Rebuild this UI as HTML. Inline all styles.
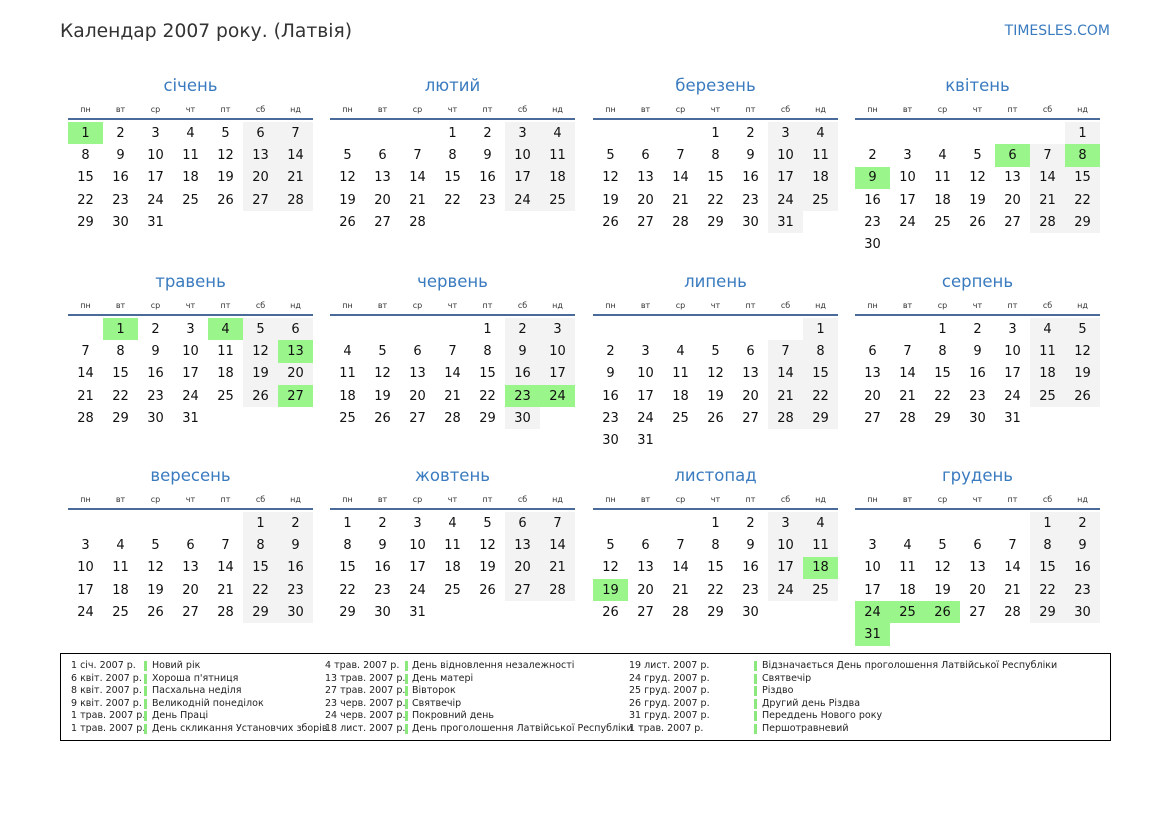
<!DOCTYPE html>
<html><head><meta charset="utf-8">
<style>
*{margin:0;padding:0;box-sizing:border-box}
body{width:1169px;height:827px;background:#fff;position:relative;font-family:"DejaVu Sans","Liberation Sans",sans-serif;color:#222;overflow:hidden}
.title{position:absolute;left:60px;top:21px;font-size:18.7px;color:#333}
.logo{position:absolute;right:59px;top:23px;font-size:14px;color:#3a7bbf}
.m{position:absolute;width:245px}
.m h2{font-weight:normal;font-size:16.5px;color:#3a7bbf;text-align:center;height:24px;line-height:24px}
.m .d{display:flex;font-size:8px;color:#333;height:22px;line-height:24px;border-bottom:2px solid #4a6a9a}
.m .d span{width:35px;text-align:center}
.m table{border-collapse:collapse;margin-top:2px}
.m td{width:35px;height:22.3px;text-align:center;font-size:13px;padding:0;color:#111}
td.w{background:#f3f3f3}
td.h{background:#9af58b}
.leg{position:absolute;left:60px;top:653px;width:1051px;height:88px;border:1px solid #000;font-size:9.5px;color:#222}
.leg div{position:absolute;white-space:nowrap;line-height:12.6px}
.bar{position:absolute;width:3px;height:10px;background:#8be87c}
</style></head><body>
<div class="title">Календар 2007 року. (Латвія)</div>
<div class="logo">TIMESLES.COM</div>

<div class="m" style="left:68px;top:74px"><h2>січень</h2><div class="d"><span>пн</span><span>вт</span><span>ср</span><span>чт</span><span>пт</span><span>сб</span><span>нд</span></div><table>
<tr><td class="h">1</td><td>2</td><td>3</td><td>4</td><td>5</td><td class="w">6</td><td class="w">7</td></tr>
<tr><td>8</td><td>9</td><td>10</td><td>11</td><td>12</td><td class="w">13</td><td class="w">14</td></tr>
<tr><td>15</td><td>16</td><td>17</td><td>18</td><td>19</td><td class="w">20</td><td class="w">21</td></tr>
<tr><td>22</td><td>23</td><td>24</td><td>25</td><td>26</td><td class="w">27</td><td class="w">28</td></tr>
<tr><td>29</td><td>30</td><td>31</td><td></td><td></td><td></td><td></td></tr></table></div>

<div class="m" style="left:330px;top:74px"><h2>лютий</h2><div class="d"><span>пн</span><span>вт</span><span>ср</span><span>чт</span><span>пт</span><span>сб</span><span>нд</span></div><table>
<tr><td></td><td></td><td></td><td>1</td><td>2</td><td class="w">3</td><td class="w">4</td></tr>
<tr><td>5</td><td>6</td><td>7</td><td>8</td><td>9</td><td class="w">10</td><td class="w">11</td></tr>
<tr><td>12</td><td>13</td><td>14</td><td>15</td><td>16</td><td class="w">17</td><td class="w">18</td></tr>
<tr><td>19</td><td>20</td><td>21</td><td>22</td><td>23</td><td class="w">24</td><td class="w">25</td></tr>
<tr><td>26</td><td>27</td><td>28</td><td></td><td></td><td></td><td></td></tr></table></div>

<div class="m" style="left:593px;top:74px"><h2>березень</h2><div class="d"><span>пн</span><span>вт</span><span>ср</span><span>чт</span><span>пт</span><span>сб</span><span>нд</span></div><table>
<tr><td></td><td></td><td></td><td>1</td><td>2</td><td class="w">3</td><td class="w">4</td></tr>
<tr><td>5</td><td>6</td><td>7</td><td>8</td><td>9</td><td class="w">10</td><td class="w">11</td></tr>
<tr><td>12</td><td>13</td><td>14</td><td>15</td><td>16</td><td class="w">17</td><td class="w">18</td></tr>
<tr><td>19</td><td>20</td><td>21</td><td>22</td><td>23</td><td class="w">24</td><td class="w">25</td></tr>
<tr><td>26</td><td>27</td><td>28</td><td>29</td><td>30</td><td class="w">31</td><td></td></tr></table></div>

<div class="m" style="left:855px;top:74px"><h2>квітень</h2><div class="d"><span>пн</span><span>вт</span><span>ср</span><span>чт</span><span>пт</span><span>сб</span><span>нд</span></div><table>
<tr><td></td><td></td><td></td><td></td><td></td><td></td><td class="w">1</td></tr>
<tr><td>2</td><td>3</td><td>4</td><td>5</td><td class="h">6</td><td class="w">7</td><td class="h">8</td></tr>
<tr><td class="h">9</td><td>10</td><td>11</td><td>12</td><td>13</td><td class="w">14</td><td class="w">15</td></tr>
<tr><td>16</td><td>17</td><td>18</td><td>19</td><td>20</td><td class="w">21</td><td class="w">22</td></tr>
<tr><td>23</td><td>24</td><td>25</td><td>26</td><td>27</td><td class="w">28</td><td class="w">29</td></tr>
<tr><td>30</td><td></td><td></td><td></td><td></td><td></td><td></td></tr></table></div>

<div class="m" style="left:68px;top:270px"><h2>травень</h2><div class="d"><span>пн</span><span>вт</span><span>ср</span><span>чт</span><span>пт</span><span>сб</span><span>нд</span></div><table>
<tr><td></td><td class="h">1</td><td>2</td><td>3</td><td class="h">4</td><td class="w">5</td><td class="w">6</td></tr>
<tr><td>7</td><td>8</td><td>9</td><td>10</td><td>11</td><td class="w">12</td><td class="h">13</td></tr>
<tr><td>14</td><td>15</td><td>16</td><td>17</td><td>18</td><td class="w">19</td><td class="w">20</td></tr>
<tr><td>21</td><td>22</td><td>23</td><td>24</td><td>25</td><td class="w">26</td><td class="h">27</td></tr>
<tr><td>28</td><td>29</td><td>30</td><td>31</td><td></td><td></td><td></td></tr></table></div>

<div class="m" style="left:330px;top:270px"><h2>червень</h2><div class="d"><span>пн</span><span>вт</span><span>ср</span><span>чт</span><span>пт</span><span>сб</span><span>нд</span></div><table>
<tr><td></td><td></td><td></td><td></td><td>1</td><td class="w">2</td><td class="w">3</td></tr>
<tr><td>4</td><td>5</td><td>6</td><td>7</td><td>8</td><td class="w">9</td><td class="w">10</td></tr>
<tr><td>11</td><td>12</td><td>13</td><td>14</td><td>15</td><td class="w">16</td><td class="w">17</td></tr>
<tr><td>18</td><td>19</td><td>20</td><td>21</td><td>22</td><td class="h">23</td><td class="h">24</td></tr>
<tr><td>25</td><td>26</td><td>27</td><td>28</td><td>29</td><td class="w">30</td><td></td></tr></table></div>

<div class="m" style="left:593px;top:270px"><h2>липень</h2><div class="d"><span>пн</span><span>вт</span><span>ср</span><span>чт</span><span>пт</span><span>сб</span><span>нд</span></div><table>
<tr><td></td><td></td><td></td><td></td><td></td><td></td><td class="w">1</td></tr>
<tr><td>2</td><td>3</td><td>4</td><td>5</td><td>6</td><td class="w">7</td><td class="w">8</td></tr>
<tr><td>9</td><td>10</td><td>11</td><td>12</td><td>13</td><td class="w">14</td><td class="w">15</td></tr>
<tr><td>16</td><td>17</td><td>18</td><td>19</td><td>20</td><td class="w">21</td><td class="w">22</td></tr>
<tr><td>23</td><td>24</td><td>25</td><td>26</td><td>27</td><td class="w">28</td><td class="w">29</td></tr>
<tr><td>30</td><td>31</td><td></td><td></td><td></td><td></td><td></td></tr></table></div>

<div class="m" style="left:855px;top:270px"><h2>серпень</h2><div class="d"><span>пн</span><span>вт</span><span>ср</span><span>чт</span><span>пт</span><span>сб</span><span>нд</span></div><table>
<tr><td></td><td></td><td>1</td><td>2</td><td>3</td><td class="w">4</td><td class="w">5</td></tr>
<tr><td>6</td><td>7</td><td>8</td><td>9</td><td>10</td><td class="w">11</td><td class="w">12</td></tr>
<tr><td>13</td><td>14</td><td>15</td><td>16</td><td>17</td><td class="w">18</td><td class="w">19</td></tr>
<tr><td>20</td><td>21</td><td>22</td><td>23</td><td>24</td><td class="w">25</td><td class="w">26</td></tr>
<tr><td>27</td><td>28</td><td>29</td><td>30</td><td>31</td><td></td><td></td></tr></table></div>

<div class="m" style="left:68px;top:464px"><h2>вересень</h2><div class="d"><span>пн</span><span>вт</span><span>ср</span><span>чт</span><span>пт</span><span>сб</span><span>нд</span></div><table>
<tr><td></td><td></td><td></td><td></td><td></td><td class="w">1</td><td class="w">2</td></tr>
<tr><td>3</td><td>4</td><td>5</td><td>6</td><td>7</td><td class="w">8</td><td class="w">9</td></tr>
<tr><td>10</td><td>11</td><td>12</td><td>13</td><td>14</td><td class="w">15</td><td class="w">16</td></tr>
<tr><td>17</td><td>18</td><td>19</td><td>20</td><td>21</td><td class="w">22</td><td class="w">23</td></tr>
<tr><td>24</td><td>25</td><td>26</td><td>27</td><td>28</td><td class="w">29</td><td class="w">30</td></tr></table></div>

<div class="m" style="left:330px;top:464px"><h2>жовтень</h2><div class="d"><span>пн</span><span>вт</span><span>ср</span><span>чт</span><span>пт</span><span>сб</span><span>нд</span></div><table>
<tr><td>1</td><td>2</td><td>3</td><td>4</td><td>5</td><td class="w">6</td><td class="w">7</td></tr>
<tr><td>8</td><td>9</td><td>10</td><td>11</td><td>12</td><td class="w">13</td><td class="w">14</td></tr>
<tr><td>15</td><td>16</td><td>17</td><td>18</td><td>19</td><td class="w">20</td><td class="w">21</td></tr>
<tr><td>22</td><td>23</td><td>24</td><td>25</td><td>26</td><td class="w">27</td><td class="w">28</td></tr>
<tr><td>29</td><td>30</td><td>31</td><td></td><td></td><td></td><td></td></tr></table></div>

<div class="m" style="left:593px;top:464px"><h2>листопад</h2><div class="d"><span>пн</span><span>вт</span><span>ср</span><span>чт</span><span>пт</span><span>сб</span><span>нд</span></div><table>
<tr><td></td><td></td><td></td><td>1</td><td>2</td><td class="w">3</td><td class="w">4</td></tr>
<tr><td>5</td><td>6</td><td>7</td><td>8</td><td>9</td><td class="w">10</td><td class="w">11</td></tr>
<tr><td>12</td><td>13</td><td>14</td><td>15</td><td>16</td><td class="w">17</td><td class="h">18</td></tr>
<tr><td class="h">19</td><td>20</td><td>21</td><td>22</td><td>23</td><td class="w">24</td><td class="w">25</td></tr>
<tr><td>26</td><td>27</td><td>28</td><td>29</td><td>30</td><td></td><td></td></tr></table></div>

<div class="m" style="left:855px;top:464px"><h2>грудень</h2><div class="d"><span>пн</span><span>вт</span><span>ср</span><span>чт</span><span>пт</span><span>сб</span><span>нд</span></div><table>
<tr><td></td><td></td><td></td><td></td><td></td><td class="w">1</td><td class="w">2</td></tr>
<tr><td>3</td><td>4</td><td>5</td><td>6</td><td>7</td><td class="w">8</td><td class="w">9</td></tr>
<tr><td>10</td><td>11</td><td>12</td><td>13</td><td>14</td><td class="w">15</td><td class="w">16</td></tr>
<tr><td>17</td><td>18</td><td>19</td><td>20</td><td>21</td><td class="w">22</td><td class="w">23</td></tr>
<tr><td class="h">24</td><td class="h">25</td><td class="h">26</td><td>27</td><td>28</td><td class="w">29</td><td class="w">30</td></tr>
<tr><td class="h">31</td><td></td><td></td><td></td><td></td><td></td><td></td></tr></table></div>

<div class="leg">
<div style="left:10px;top:6px">1 січ. 2007 р.<br>6 квіт. 2007 р.<br>8 квіт. 2007 р.<br>9 квіт. 2007 р.<br>1 трав. 2007 р.<br>1 трав. 2007 р.</div>
<div style="left:91px;top:6px">Новий рік<br>Хороша п'ятниця<br>Пасхальна неділя<br>Великодній понеділок<br>День Праці<br>День скликання Установчих зборів</div>
<div style="left:264px;top:6px">4 трав. 2007 р.<br>13 трав. 2007 р.<br>27 трав. 2007 р.<br>23 черв. 2007 р.<br>24 черв. 2007 р.<br>18 лист. 2007 р.</div>
<div style="left:351px;top:6px">День відновлення незалежності<br>День матері<br>Вівторок<br>Святвечір<br>Покровний день<br>День проголошення Латвійської Республіки</div>
<div style="left:568px;top:6px">19 лист. 2007 р.<br>24 груд. 2007 р.<br>25 груд. 2007 р.<br>26 груд. 2007 р.<br>31 груд. 2007 р.<br>1 трав. 2007 р.</div>
<div style="left:701px;top:6px">Відзначається День проголошення Латвійської Республіки<br>Святвечір<br>Різдво<br>Другий день Різдва<br>Переддень Нового року<br>Першотравневий</div>
<span class="bar" style="left:83px;top:7px"></span><span class="bar" style="left:83px;top:19.6px"></span><span class="bar" style="left:83px;top:32.2px"></span><span class="bar" style="left:83px;top:44.8px"></span><span class="bar" style="left:83px;top:57.4px"></span><span class="bar" style="left:83px;top:70px"></span>
<span class="bar" style="left:344px;top:7px"></span><span class="bar" style="left:344px;top:19.6px"></span><span class="bar" style="left:344px;top:32.2px"></span><span class="bar" style="left:344px;top:44.8px"></span><span class="bar" style="left:344px;top:57.4px"></span><span class="bar" style="left:344px;top:70px"></span>
<span class="bar" style="left:693px;top:7px"></span><span class="bar" style="left:693px;top:19.6px"></span><span class="bar" style="left:693px;top:32.2px"></span><span class="bar" style="left:693px;top:44.8px"></span><span class="bar" style="left:693px;top:57.4px"></span><span class="bar" style="left:693px;top:70px"></span>
</div>
</body></html>
